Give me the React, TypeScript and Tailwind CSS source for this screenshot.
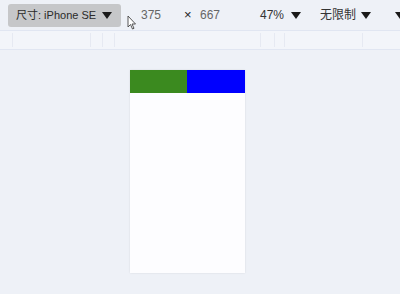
import React from "react";

const Tri = () => (
  <svg width="10" height="7" viewBox="0 0 10 7" className="shrink-0 block">
    <path d="M0 0 H10 L5 7 Z" fill="#1a1a1a" />
  </svg>
);

export default function App() {
  const font = { fontFamily: '"Liberation Sans", "Noto Sans CJK SC", sans-serif' };
  return (
    <div className="w-[400px] h-[294px] bg-[#eef1f7] overflow-hidden relative" style={font}>
      <div className="h-[30px] w-[420px] flex items-center text-[12px] text-[#333] whitespace-nowrap">
        <div className="ml-[8px] h-[23px] w-[113px] shrink-0 rounded-[3px] bg-[#c6c7c9] flex items-center pl-[8px]">
          <span className="w-[86px] shrink-0 text-[11px] text-[#2a2a2a]">尺寸: iPhone SE</span>
          <Tri />
        </div>
        <span className="ml-[20px] w-[43px] shrink-0 text-[#666]">375</span>
        <span className="w-[16px] shrink-0 text-[#222] text-[13px]">×</span>
        <span className="w-[60px] shrink-0 text-[#666]">667</span>
        <span className="w-[31px] shrink-0 text-[#333]">47%</span>
        <span className="w-[29px] shrink-0 flex"><Tri /></span>
        <span className="w-[41px] shrink-0 text-[#333]">无限制</span>
        <span className="w-[34px] shrink-0 flex"><Tri /></span>
        <span className="w-[12px] shrink-0 flex"><Tri /></span>
      </div>
      <div className="h-[20px] border-y border-[#e1e6f2] bg-[#f3f5fa] relative">
        <div className="absolute left-[12px] top-[2px] h-[14px] border-l border-[#e6e9f2]" />
        <div className="absolute left-[90px] top-[2px] h-[14px] border-l border-[#e6e9f2]" />
        <div className="absolute left-[102px] top-[2px] h-[14px] border-l border-[#e6e9f2]" />
        <div className="absolute left-[114px] top-[2px] h-[14px] border-l border-[#e6e9f2]" />
        <div className="absolute left-[260px] top-[2px] h-[14px] border-l border-[#e6e9f2]" />
        <div className="absolute left-[274px] top-[2px] h-[14px] border-l border-[#e6e9f2]" />
        <div className="absolute left-[284px] top-[2px] h-[14px] border-l border-[#e6e9f2]" />
        <div className="absolute left-[362px] top-[2px] h-[14px] border-l border-[#e6e9f2]" />
      </div>
      <div className="flex pt-[20px] pl-[130px]">
        <div className="w-[115px] h-[203px] bg-[#fdfdff] shadow-[0_0_2px_rgba(0,0,0,0.1)] flex flex-col">
          <div className="flex h-[23px]">
            <div className="w-[57px] bg-[#3b8a1f]" />
            <div className="flex-1 bg-[#0000ff]" />
          </div>
          <div className="flex-1" />
        </div>
      </div>
      <svg className="absolute left-[127px] top-[15px]" width="10" height="15" viewBox="0 0 10 15">
        <path d="M1 1 L1 12 L3.5 9.5 L5.5 14 L7 13.3 L5 9 L8.5 9 Z" fill="#fff" stroke="#444" strokeWidth="0.9" />
      </svg>
    </div>
  );
}
